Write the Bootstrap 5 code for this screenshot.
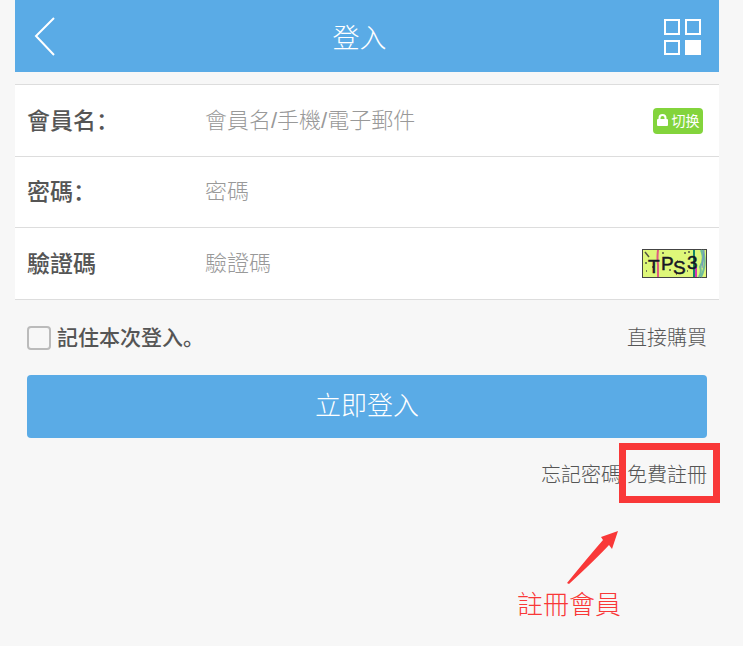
<!DOCTYPE html>
<html lang="zh">
<head>
<meta charset="utf-8">
<meta name="viewport" content="width=device-width, initial-scale=1">
<title>登入</title>
<link href="https://cdn.jsdelivr.net/npm/bootstrap@5.3.0/dist/css/bootstrap.min.css" rel="stylesheet">
<style>
body { background: #f7f7f7; color: #555; font-family: "Liberation Sans", "Noto Sans CJK SC", sans-serif; font-weight: 300; }
.page { padding: 0 24px 0 15px; }
.topbar { background: #5aabe6; height: 72px; padding: 0 17px 0 18px; }
.topbar h1 { font-size: 27px; font-weight: 300; line-height: 40px; padding: 6px 18px 0 0; }
.fields { margin-top: 12px; background: #fff; border-top: 1px solid #ddd; }
.field-row { height: 72px; padding: 0 12px; border-bottom: 1px solid #ddd; }
.field-row + .field-row { height: 71px; }
.field-row + .field-row + .field-row { height: 72px; }
.field-row label { width: 178px; font-size: 23px; font-weight: 500; line-height: 36px; }
.field-row input { font-size: 22px; font-weight: 300; line-height: 36px; min-width: 0; color: #555; }
.field-row input::placeholder { color: #999; opacity: 1; }
.switch-btn { background: #83d43c; border-radius: 4px; width: 50px; height: 26px; font-size: 14px; line-height: 26px; margin-right: 4px; }
.actions { padding: 0 12px; }
.remember-row { height: 75px; }
.remember-row .form-check-input { width: 24px; height: 24px; border: 2px solid #bbb; border-radius: 4px; background-color: #f7f7f7; }
.remember-row label { font-size: 21px; font-weight: 500; line-height: 32px; }
.check-group { gap: 6px; }
.small-link { color: #555; font-size: 20px; line-height: 30px; }
.login-btn { background: #5aabe6; border-radius: 4px; height: 63px; font-size: 26px; font-weight: 300; }
.login-btn:hover { background: #4a9cd8; }
.help-row { padding-top: 22px; gap: 6px; }
.marker { position: absolute; top: -17px; right: -13px; bottom: -13px; left: -8px; border: 7px solid #f93838; pointer-events: none; }
.hint { color: #f93838; margin: 40px 86px 0 0; }
.hint p { font-size: 26px; line-height: 38px; }
</style>
</head>
<body>
<div class="page">
  <header class="topbar d-flex align-items-center justify-content-between text-white">
    <a href="#" aria-label="返回" class="d-flex text-white"><svg width="40" height="40" viewBox="0 0 40 40" fill="none" stroke="currentColor" stroke-width="2"><path d="M21 2 3 20 21 39"/></svg></a>
    <h1 class="m-0">登入</h1>
    <a href="#" aria-label="選單" class="d-flex text-white"><svg width="38" height="40" viewBox="0 -2 38 40" fill="none" stroke="currentColor" stroke-width="2"><path d="M1 2h14v14H1zM22 2h14v14H22zM1 23h14v13H1z"/><path d="M21 22h16v15H21z" fill="currentColor" stroke="none"/></svg></a>
  </header>
  <form>
    <div class="fields">
      <div class="field-row d-flex align-items-center">
        <label for="user" class="flex-shrink-0">會員名：</label>
        <input id="user" type="text" class="flex-grow-1 border-0 p-0 bg-transparent" placeholder="會員名/手機/電子郵件">
        <button type="button" class="switch-btn border-0 p-0 text-white d-flex align-items-center justify-content-center gap-1 flex-shrink-0"><svg width="11" height="13" viewBox="0 0 11 13" aria-hidden="true"><path d="M2.5 6V4a3 3 0 0 1 6 0v2" fill="none" stroke="#fff" stroke-width="2"/><rect y="5" width="11" height="7" rx="1" fill="#fff"/></svg>切换</button>
      </div>
      <div class="field-row d-flex align-items-center">
        <label for="pass" class="flex-shrink-0">密碼：</label>
        <input id="pass" type="password" class="flex-grow-1 border-0 p-0 bg-transparent" placeholder="密碼">
      </div>
      <div class="field-row d-flex align-items-center">
        <label for="code" class="flex-shrink-0">驗證碼</label>
        <input id="code" type="text" class="flex-grow-1 border-0 p-0 bg-transparent" placeholder="驗證碼">
        <svg class="flex-shrink-0" width="65" height="29" viewBox="0 0 65 29" role="img" aria-label="驗證碼圖片">
          <rect x=".5" y=".5" width="64" height="28" fill="#def779" stroke="#444"/>
          <path d="M16 1q-1 8 0 15v12" stroke="#df5b82" stroke-width="2" fill="none"/>
          <path d="M52 1v27" stroke="#168767" stroke-width="2"/><path d="M54 18v10" stroke="#d936b0" stroke-width="2"/>
          <path d="M57 28q3-5 1-10 5-8 1-17M59 28q6-12 2-27" stroke="#70bb9c" stroke-width="2" fill="none"/>
          <path d="M62 1q-1 12-2 18" stroke="#7992c8" fill="none"/>
          <path d="M3 3l4 5M3 14h2M4 22h1M10 18h2M20 4h2M27 21h2M35 12h1M42 4h2M46 3h2M34 25h1M45 22h1" stroke="#535443" stroke-width="1.5"/>
          <g font-family="Liberation Sans, sans-serif" font-size="19" font-weight="400" fill="#171725" stroke="#171725" stroke-width=".5"><text x="6" y="24">T</text><text x="19" y="21">P</text><text x="31" y="25">S</text><text x="45" y="20">3</text></g>
        </svg>
      </div>
    </div>
    <div class="actions">
      <div class="remember-row d-flex align-items-center justify-content-between">
        <div class="check-group d-flex align-items-center">
          <input id="remember" type="checkbox" class="form-check-input m-0">
          <label for="remember">記住本次登入。</label>
        </div>
        <a href="#" class="small-link text-decoration-none">直接購買</a>
      </div>
      <button type="submit" class="login-btn btn w-100 p-0 border-0 text-white">立即登入</button>
      <div class="help-row d-flex justify-content-end">
        <a href="#" class="small-link text-decoration-none">忘記密碼</a>
        <span class="position-relative d-flex"><a href="#" class="small-link text-decoration-none">免費註冊</a><span class="marker"></span></span>
      </div>
      <div class="hint d-flex flex-column align-items-end">
        <svg width="54" height="56" viewBox="0 0 54 56" aria-hidden="true"><path d="M51 1 34 7l2 3Q22 26 0 53l2 1Q29 29 42 15l3 4z" fill="currentColor"/></svg>
        <p class="m-0">註冊會員</p>
      </div>
    </div>
  </form>
</div>
<script src="https://cdn.jsdelivr.net/npm/bootstrap@5.3.0/dist/js/bootstrap.bundle.min.js"></script>
</body>
</html>
